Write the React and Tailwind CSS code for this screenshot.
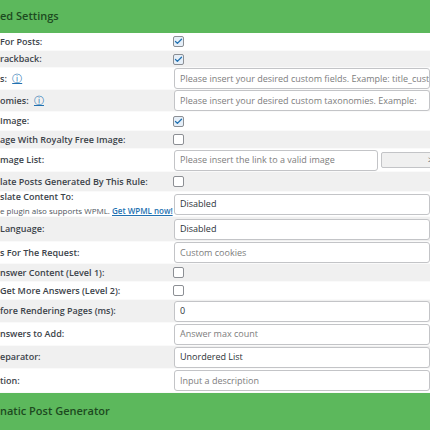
import { Check } from 'lucide-react'

const Box = ({ checked }) => (
    <div className={`w-[11px] h-[11px] rounded-[2px] border border-[#8c8f94] flex items-center justify-center ${checked ? 'bg-[#e6eff8]' : 'bg-white'}`}>
        {checked && <Check className="w-[9px] h-[9px] text-[#2271b1]" strokeWidth={3.5} />}
    </div>
)

const Field = ({ text, placeholder, className = '' }) => (
    <div className={`h-[21px] ml-[1px] border border-[#c3c4c7] rounded-[3px] bg-white flex items-center px-[5px] whitespace-nowrap overflow-hidden text-[9px] ${className}`}>
        <span className={placeholder ? 'text-[#7d7d7d]' : 'text-[#2c3338]'}>{text}</span>
    </div>
)

const Info = () => (
    <span className="ml-[3px] text-[#2271b1] underline font-normal text-[10px]">ⓘ</span>
)

const rows = [
    { h: 'h-[18px]', label: 'For Posts:', v: <Box checked /> },
    { h: 'h-[17px]', label: 'rackback:', v: <Box checked /> },
    { h: 'h-[22px]', label: <>s: <Info /></>, v: <Field placeholder text="Please insert your desired custom fields. Example: title_custom_field" /> },
    { h: 'h-[22px]', label: <>omies: <Info /></>, v: <Field placeholder text="Please insert your desired custom taxonomies. Example:" /> },
    { h: 'h-[19px]', label: 'Image:', v: <Box checked /> },
    { h: 'h-[18px]', label: 'age With Royalty Free Image:', v: <Box /> },
    {
        h: 'h-[23px]', label: 'mage List:', v: (
            <div className="flex items-center gap-[3px]">
                <Field placeholder text="Please insert the link to a valid image" className="w-[204px] shrink-0" />
                <div className="h-[16px] w-[80px] shrink-0 border border-[#c3c4c7] rounded-[2px] bg-[#f0f0f0] flex items-center pl-[46px] text-[#555]">&gt;</div>
            </div>
        )
    },
    { h: 'h-[20px]', label: 'late Posts Generated By This Rule:', v: <Box /> },
    {
        h: 'h-[25px]', label: (
            <div className="leading-[14px]">
                <div>slate Content To:</div>
                <div className="font-normal text-[#50575e] text-[8px]">e plugin also supports WPML. <span className="text-[#2271b1] underline font-semibold">Get WPML now!</span></div>
            </div>
        ), v: <Field text="Disabled" />
    },
    { h: 'h-[25px]', label: 'Language:', v: <Field text="Disabled" /> },
    { h: 'h-[22px]', label: 's For The Request:', v: <Field placeholder text="Custom cookies" /> },
    { h: 'h-[18px]', label: 'nswer Content (Level 1):', v: <Box /> },
    { h: 'h-[18px]', label: 'Get More Answers (Level 2):', v: <Box /> },
    { h: 'h-[23px]', label: 'fore Rendering Pages (ms):', v: <Field text="0" /> },
    { h: 'h-[23px]', label: 'nswers to Add:', v: <Field placeholder text="Answer max count" /> },
    { h: 'h-[23px]', label: 'eparator:', v: <Field text="Unordered List" /> },
    { h: 'h-[24px]', label: 'tion:', v: <Field placeholder text="Input a description" /> },
]

export default function App() {
    return (
        <div className="w-[430px] h-[430px] overflow-hidden bg-white flex flex-col font-['Open_Sans',sans-serif] text-[9px]">
            <div className="h-[33px] shrink-0 bg-[#5cb85c] flex items-center text-[11px] font-semibold text-[#1d4a1f]">
                ed Settings
            </div>
            {rows.map((r, i) => (
                <div
                    key={i}
                    className={`${r.h} shrink-0 flex items-center border-b border-[#fafafa] ${i % 2 ? 'bg-[#f0f0f0]' : 'bg-white'}`}
                >
                    <div className="w-[171px] shrink-0 font-semibold text-[#3c434a] whitespace-nowrap">{r.label}</div>
                    <div className="flex-1 min-w-0 pl-[2px]">{r.v}</div>
                </div>
            ))}
            <div className="flex-1 bg-[#5cb85c] flex items-center text-[11px] font-semibold text-[#1d4a1f]">
                natic Post Generator
            </div>
        </div>
    )
}
